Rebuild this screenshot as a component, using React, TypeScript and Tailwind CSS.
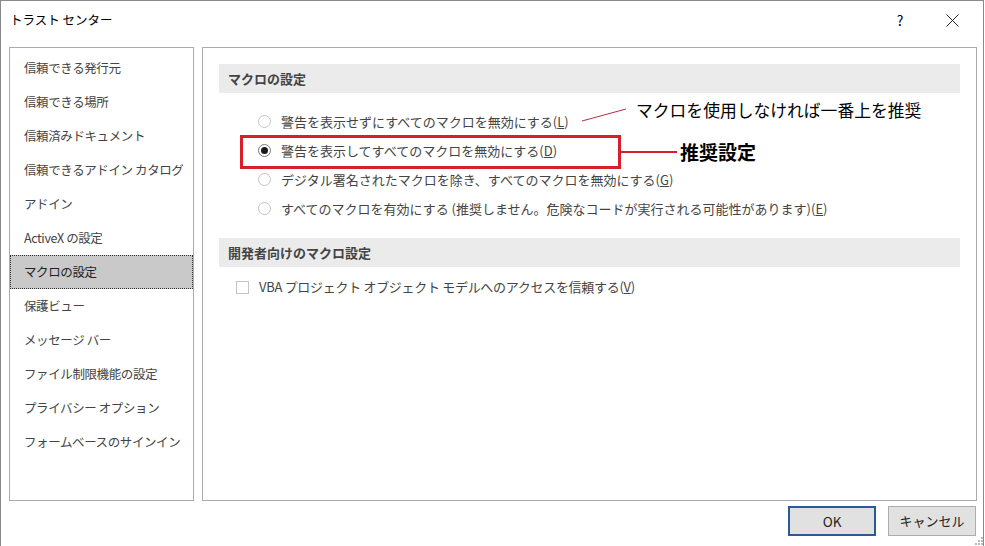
import React from "react";

const navItems = [
  "信頼できる発行元",
  "信頼できる場所",
  "信頼済みドキュメント",
  "信頼できるアドイン カタログ",
  "アドイン",
  "ActiveX の設定",
  "マクロの設定",
  "保護ビュー",
  "メッセージ バー",
  "ファイル制限機能の設定",
  "プライバシー オプション",
  "フォームベースのサインイン",
];

const macroOptions = [
  { label: "警告を表示せずにすべてのマクロを無効にする(", key: "L", checked: false },
  { label: "警告を表示してすべてのマクロを無効にする(", key: "D", checked: true },
  { label: "デジタル署名されたマクロを除き、すべてのマクロを無効にする(", key: "G", checked: false },
  {
    label: "すべてのマクロを有効にする (推奨しません。危険なコードが実行される可能性があります)(",
    key: "E",
    checked: false,
  },
];

const Radio = ({ checked }: { checked: boolean }) => (
  <span
    className={`w-[13px] h-[13px] rounded-full border flex items-center justify-center shrink-0 bg-white ${
      checked ? "border-[#7a7a7a]" : "border-[#c4c4c4]"
    }`}
  >
    {checked && <span className="w-[7px] h-[7px] rounded-full bg-[#1a1a1a]" />}
  </span>
);

export default function App() {
  return (
    <div
      className="relative w-[985px] h-[546px] bg-white overflow-hidden text-[#444]"
      style={{ fontFamily: '"Noto Sans CJK JP", sans-serif' }}
    >
      <div className="w-[984px] h-[546px] border-l border-t border-r border-[#8a8a8a] flex flex-col">
        {/* title bar */}
        <div className="h-[38px] flex items-center pl-[9px] pr-[20px]">
          <span className="text-[12.5px] text-black flex-1">トラスト センター</span>
          <span className="text-[14px] text-black w-[20px] text-center mr-[36px]">?</span>
          <svg width="13" height="13" viewBox="0 0 13 13" className="mr-[4px]">
            <path d="M0.5 0.5 L12.5 12.5 M12.5 0.5 L0.5 12.5" stroke="#222" strokeWidth="1" />
          </svg>
        </div>

        {/* body */}
        <div className="flex gap-[8px] pl-[8px] pt-[8px]">
          {/* left nav */}
          <div className="w-[185px] h-[454px] border border-[#ababab] pt-[3px]">
            {navItems.map((item) => {
              const sel = item === "マクロの設定";
              return (
                <div
                  key={item}
                  className={`h-[34px] flex items-center pl-[13px] text-[12.5px] tracking-[-0.4px] whitespace-nowrap ${
                    sel
                      ? "bg-[#c9c9c9] border border-dotted border-[#333] text-[#222]"
                      : "border border-transparent"
                  }`}
                >
                  {item}
                </div>
              );
            })}
          </div>

          {/* right content */}
          <div className="w-[775px] h-[454px] border border-[#ababab] pt-[16px] pl-[16px] pr-[16px]">
            <div className="h-[29px] bg-[#ebebeb] flex items-center pl-[9px] text-[13px] font-bold text-[#444]">
              マクロの設定
            </div>
            <div className="pt-[14px] pl-[39px] flex flex-col">
              {macroOptions.map((o) => (
                <div key={o.key} className="h-[29px] flex items-center gap-[10px] text-[13px] whitespace-nowrap">
                  <Radio checked={o.checked} />
                  <span>
                    {o.label}
                    <span className="underline">{o.key}</span>)
                  </span>
                </div>
              ))}
            </div>

            <div className="mt-[15px] h-[29px] bg-[#ebebeb] flex items-center pl-[9px] text-[13px] font-bold text-[#444]">
              開発者向けのマクロ設定
            </div>
            <div className="pt-[11px] pl-[17px] h-[29px] flex items-center gap-[10px] text-[13px] tracking-[-0.3px] whitespace-nowrap">
              <span className="w-[13px] h-[13px] border border-[#c4c4c4] bg-white shrink-0" />
              <span>
                VBA プロジェクト オブジェクト モデルへのアクセスを信頼する(<span className="underline">V</span>)
              </span>
            </div>
          </div>
        </div>

        {/* footer buttons */}
        <div className="flex justify-end gap-[12px] pr-[7px] pt-[5px]">
          <button className="w-[88px] h-[30px] bg-[#e1e1e1] border-2 border-[#2c5a96] text-[13.5px] text-[#222]">
            OK
          </button>
          <button className="w-[88px] h-[30px] bg-[#e1e1e1] border border-[#adadad] text-[13px] text-[#222]">
            キャンセル
          </button>
        </div>
      </div>

      {/* resize grip */}
      <svg width="10" height="10" viewBox="0 0 10 10" className="absolute right-[2px] bottom-[1px]">
        {[
          [8, 2],
          [5, 5],
          [8, 5],
          [2, 8],
          [5, 8],
          [8, 8],
        ].map(([x, y]) => (
          <rect key={`${x}-${y}`} x={x} y={y} width="2" height="2" fill="#b8b8b8" />
        ))}
      </svg>

      {/* annotations */}
      <div className="absolute left-[240px] top-[135px] w-[381px] h-[34px] border-[3px] border-[#d6202c]" />
      <div className="absolute left-[620px] top-[151px] w-[57px] h-[2px] bg-[#d6202c]" />
      <span className="absolute left-[680px] top-[139px] text-[19px] font-bold text-black leading-[26px]">
        推奨設定
      </span>
      <svg width="50" height="16" className="absolute left-[580px] top-[106px]">
        <line x1="2" y1="15" x2="46" y2="3" stroke="#b5303a" strokeWidth="1" />
      </svg>
      <span className="absolute left-[636px] top-[98px] text-[16.8px] text-black leading-[24px]">
        マクロを使用しなければ一番上を推奨
      </span>
    </div>
  );
}
